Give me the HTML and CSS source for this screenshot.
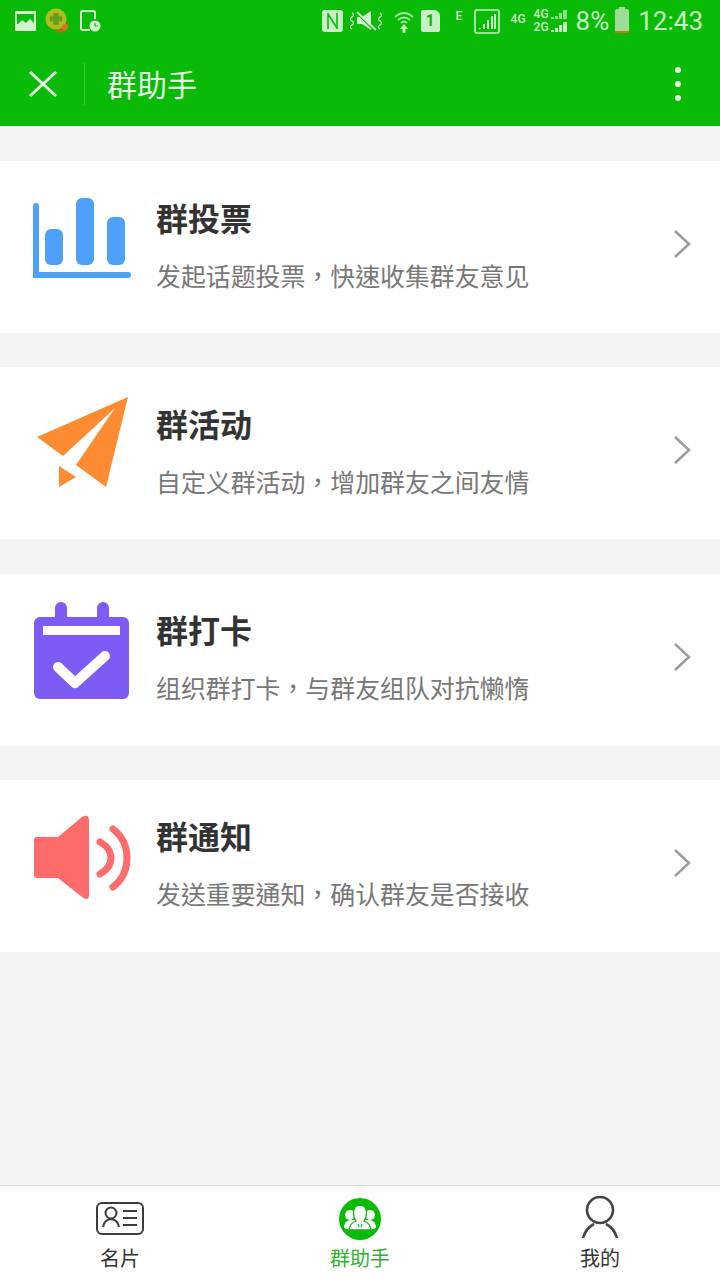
FILE: index.html
```html
<!DOCTYPE html>
<html lang="zh-CN">
<head>
   <meta charset="UTF-8">
   <meta name="viewport" content="width=device-width, initial-scale=1.0">
   <title>群助手</title>
   <link rel="stylesheet" href="styles.css">
</head>
<body>

<div class="header">
   <div class="status-bar">
       <div class="status-left">
           <svg width="21" height="20" viewBox="0 0 21 20"><rect width="21" height="20" rx="1" fill="#d3f2d0"/><rect x="2" y="3" width="17" height="10" fill="#09bb07"/><path d="M2 14 L7 9 L11 12 L15 8 L19 12 V15 H2Z" fill="#d3f2d0"/></svg>
           <svg width="26" height="26" viewBox="0 0 26 26"><circle cx="11" cy="11" r="10.5" fill="#b3ba1c"/><path d="M11 5 V17 M5 11 H17" stroke="#5f9e16" stroke-width="5"/><path d="M23 13 Q25 23 15 25 Q12 25 10 22 Q20 22 23 13Z" fill="#c8601e"/><circle cx="20" cy="19" r="3" fill="#d07a28"/></svg>
           <svg width="21" height="22" viewBox="0 0 21 22"><path d="M10 20 H3 Q1 20 1 18 V3 Q1 1 3 1 H13 Q15 1 15 3 V9" fill="none" stroke="#d3f2d0" stroke-width="2"/><circle cx="15" cy="16" r="5.5" fill="#d3f2d0"/><path d="M15 13 V16 H18" fill="none" stroke="#09bb07" stroke-width="1.2"/></svg>
       </div>
       <div class="status-right">
           <svg class="ic-n" width="21" height="22" viewBox="0 0 21 22"><rect width="21" height="22" rx="3" fill="#c9efc7"/><path d="M6 3 V19 M15 3 V19 M6 4 L15 18" fill="none" stroke="#09bb07" stroke-width="1.6"/></svg>
           <svg class="ic-mute" width="32" height="22" viewBox="0 0 32 22"><path d="M2 3 q3 2 0 4 q-3 2 0 4 q3 2 0 4 q-3 2 0 4 M30 3 q3 2 0 4 q-3 2 0 4 q3 2 0 4 q-3 2 0 4" fill="none" stroke="#d3f2d0" stroke-width="1.3"/><path d="M7 7 H12 L21 1 V20 L12 14 H7Z" fill="#d3f2d0"/><path d="M6 2 L25 21" stroke="#09bb07" stroke-width="2"/><path d="M7 2 L26 20" stroke="#d3f2d0" stroke-width="2"/></svg>
           <svg class="ic-wifi" width="20" height="24" viewBox="0 0 20 24"><path d="M1 8 Q10 0 19 8 M4 11 Q10 6 16 11 M7 14 Q10 11 13 14" fill="none" stroke="#a9e4a6" stroke-width="1.7"/><path d="M10 15 L14 20 H11.5 V24 H8.5 V20 H6Z" fill="#c9efc7"/></svg>
           <div class="sim">1</div>
           <span class="tiny ic-e">E</span>
           <svg class="ic-signal" width="26" height="25" viewBox="0 0 26 25"><rect x="1" y="1" width="24" height="23" rx="1.5" fill="none" stroke="#c9efc7" stroke-width="1.6"/><path d="M5 20 h2 v-1 h-2z M9 20 h2 v-5 h-2z M13 20 h2 v-9 h-2z M17 20 h2 v-13 h-2z M20 20 h2 v-15 h-2z" fill="#c9efc7"/></svg>
           <span class="tiny ic-4g">4G</span>
           <div class="dual">
               <span class="tiny">4G</span>
               <span class="tiny">2G</span>
           </div>
           <svg class="ic-bars" width="18" height="24" viewBox="0 0 18 24"><path d="M1 10 h3 v-2 h-3z M5 10 h3 v-3 h-3z M9 10 h3 v-6 h-3z M13 10 h4 v-9 h-4z" fill="#8fdb8c"/><path d="M1 23 h3 v-2 h-3z M5 23 h3 v-4 h-3z M9 23 h3 v-7 h-3z M13 23 h4 v-10 h-4z" fill="#c9efc7"/></svg>
           <span class="battery-text">8%</span>
           <div class="battery"><div class="battery-low"></div></div>
           <span class="clock">12:43</span>
       </div>
   </div>
   <div class="nav-bar">
       <svg class="nav-close" width="30" height="30" viewBox="0 0 30 30"><path d="M2 3 L28 27 M28 3 L2 27" stroke="#e6f8e5" stroke-width="3"/></svg>
       <div class="nav-line"></div>
       <div class="nav-title">群助手</div>
       <div class="nav-more"><i></i><i></i><i></i></div>
   </div>
</div>

<div class="list">
   <div class="card">
       <svg class="card-icon" viewBox="33 161 98 172"><path d="M36 206 V275 H128" fill="none" stroke="#4ea1fb" stroke-width="6" stroke-linecap="round"/><rect x="45" y="229" width="18" height="36" rx="6" fill="#4ea1fb"/><rect x="76" y="198" width="18" height="67" rx="6" fill="#4ea1fb"/><rect x="107" y="217" width="18" height="48" rx="6" fill="#4ea1fb"/></svg>
       <div class="card-text">
           <div class="card-title">群投票</div>
           <div class="card-sub" lang="zh-TW">发起话题投票，快速收集群友意见</div>
       </div>
       <svg class="chevron" width="18" height="30" viewBox="0 0 18 30"><path d="M2 2 L16 15 L2 28" fill="none" stroke="#9b9b9b" stroke-width="2.5"/></svg>
   </div>
   <div class="card">
       <svg class="card-icon" viewBox="33 367 98 172"><path d="M128 397 L37 437 L63 456 L115 408Z M128 397 L115 408 L76 465 L106 487Z M59 466 L76 477 L59 487Z" fill="#fd8b31"/></svg>
       <div class="card-text">
           <div class="card-title">群活动</div>
           <div class="card-sub" lang="zh-TW">自定义群活动，增加群友之间友情</div>
       </div>
       <svg class="chevron" width="18" height="30" viewBox="0 0 18 30"><path d="M2 2 L16 15 L2 28" fill="none" stroke="#9b9b9b" stroke-width="2.5"/></svg>
   </div>
   <div class="card">
       <svg class="card-icon" viewBox="33 574 98 172"><rect x="55" y="602" width="12" height="24" rx="6" fill="#7f5bf6"/><rect x="97" y="602" width="12" height="24" rx="6" fill="#7f5bf6"/><rect x="34" y="617" width="95" height="82" rx="6" fill="#7f5bf6"/><rect x="43" y="626" width="77" height="9" fill="#fff"/><path d="M58 667 L75 683 L105 656" fill="none" stroke="#fff" stroke-width="10" stroke-linecap="round" stroke-linejoin="round"/></svg>
       <div class="card-text">
           <div class="card-title">群打卡</div>
           <div class="card-sub" lang="zh-TW">组织群打卡，与群友组队对抗懒惰</div>
       </div>
       <svg class="chevron" width="18" height="30" viewBox="0 0 18 30"><path d="M2 2 L16 15 L2 28" fill="none" stroke="#9b9b9b" stroke-width="2.5"/></svg>
   </div>
   <div class="card">
       <svg class="card-icon" viewBox="33 780 98 172"><path d="M37 837 H58 L82 817 Q89 813 89 821 V895 Q89 902 82 897 L58 878 H37 Q34 878 34 875 V840 Q34 837 37 837Z" fill="#fd6b6b"/><path d="M100 842 Q111 848 111 858 Q111 868 100 874" fill="none" stroke="#fd6b6b" stroke-width="7" stroke-linecap="round"/><path d="M113 829 Q127 840 127 858 Q127 876 113 887" fill="none" stroke="#fd6b6b" stroke-width="7" stroke-linecap="round"/></svg>
       <div class="card-text">
           <div class="card-title">群通知</div>
           <div class="card-sub" lang="zh-TW">发送重要通知，确认群友是否接收</div>
       </div>
       <svg class="chevron" width="18" height="30" viewBox="0 0 18 30"><path d="M2 2 L16 15 L2 28" fill="none" stroke="#9b9b9b" stroke-width="2.5"/></svg>
   </div>
</div>

<div class="tab-bar">
   <div class="tab">
       <svg class="tab-icon" width="48" height="44" viewBox="0 0 48 44"><rect x="1" y="6" width="46" height="31" rx="5" fill="none" stroke="#3c3c3c" stroke-width="2"/><circle cx="15" cy="16" r="5.5" fill="none" stroke="#3c3c3c" stroke-width="2"/><path d="M7 30 Q8 23 15 22 Q22 23 23 30" fill="none" stroke="#3c3c3c" stroke-width="2"/><path d="M27 14 H41 M27 21 H41 M27 28 H41" stroke="#3c3c3c" stroke-width="2"/></svg>
       <div class="tab-label">名片</div>
   </div>
   <div class="tab tab-active">
       <svg class="tab-icon" width="44" height="44" viewBox="0 0 44 44"><circle cx="22" cy="22" r="21" fill="#09bb07"/><circle cx="12" cy="18" r="5" fill="#fff"/><circle cx="32" cy="18" r="5" fill="#fff"/><path d="M6 31 Q6 24 12 23 H32 Q38 24 38 31 L32 33 H12Z" fill="#fff"/><path d="M15.5 16 Q15.5 8 22 8 Q28.5 8 28.5 16 Q28.5 21 26 24 Q32 26 33 33 H11 Q12 26 18 24 Q15.5 21 15.5 16Z" fill="#fff" stroke="#09bb07" stroke-width="1.3"/><path d="M20 27 L21 30 M24 27 L23 30" stroke="#09bb07" stroke-width="1.2"/></svg>
       <div class="tab-label">群助手</div>
   </div>
   <div class="tab">
       <svg class="tab-icon" width="44" height="44" viewBox="0 0 44 44"><circle cx="22" cy="13" r="13" fill="none" stroke="#444" stroke-width="2.6"/><path d="M5 41 Q8 31 16 27 M39 41 Q36 31 28 27" fill="none" stroke="#444" stroke-width="2.6"/></svg>
       <div class="tab-label">我的</div>
   </div>
</div>

</body>
</html>
```

FILE: styles.css
```css
body {
    font-family: "Noto Sans CJK SC", "Noto Sans", sans-serif;
    background-color: #f4f4f6;
    margin: 0;
    height: 1280px;
    display: flex;
    flex-direction: column;
    overflow: hidden;
}
.header {
    background-color: #09bb07;
    height: 126px;
    flex-shrink: 0;
}
.status-bar {
    height: 42px;
    display: flex;
    justify-content: space-between;
    align-items: center;
    padding: 0 17px 0 15px;
}
.status-left {
    display: flex;
    align-items: center;
    gap: 9px;
}
.status-right {
    display: flex;
    align-items: center;
    font-family: Roboto, sans-serif;
    color: #c9efc7;
}
.ic-mute {
    margin-left: 7px;
}
.ic-wifi {
    margin-left: 12px;
}
.sim {
    width: 19px;
    height: 22px;
    margin-left: 7px;
    background-color: #c9efc7;
    border-radius: 2px 6px 2px 2px;
    color: #09bb07;
    font-size: 16px;
    font-weight: 700;
    line-height: 22px;
    text-align: center;
}
.tiny {
    font-size: 12px;
    font-weight: 500;
    line-height: 13px;
}
.ic-e {
    margin: -10px 0 0 16px;
    width: 8px;
}
.ic-signal {
    margin-left: 10px;
}
.ic-4g {
    margin: -4px 0 0 11px;
}
.dual {
    display: flex;
    flex-direction: column;
    margin-left: 8px;
}
.ic-bars {
    margin-left: 1px;
}
.battery-text {
    font-size: 26px;
    margin-left: 8px;
}
.battery {
    width: 14px;
    height: 24px;
    margin-left: 6px;
    background-color: #9fdc98;
    border-radius: 2px;
    position: relative;
    display: flex;
    align-items: flex-end;
}
.battery:before {
    content: "";
    position: absolute;
    top: -2px;
    left: 4px;
    width: 6px;
    height: 2px;
    background-color: #9fdc98;
}
.battery-low {
    width: 100%;
    height: 2px;
    background-color: #d0701c;
}
.clock {
    font-size: 26px;
    margin-left: 9px;
}
.nav-bar {
    height: 84px;
    display: flex;
    align-items: center;
    padding-left: 28px;
}
.nav-line {
    width: 1px;
    height: 42px;
    margin-left: 26px;
    background-color: #3fcb3d;
}
.nav-title {
    margin-left: 22px;
    padding-bottom: 3px;
    font-size: 30px;
    color: #e6f8e5;
}
.nav-more {
    margin-left: auto;
    margin-right: 39px;
    display: flex;
    flex-direction: column;
    gap: 8px;
}
.nav-more i {
    display: block;
    width: 6px;
    height: 6px;
    border-radius: 50%;
    background-color: #e6f8e5;
}
.list {
    flex: 1;
    padding-top: 35px;
    display: flex;
    flex-direction: column;
    gap: 34.3px;
}
.card {
    height: 172px;
    background-color: white;
    display: flex;
    align-items: center;
    padding: 0 29px 0 33px;
}
.card-icon {
    width: 98px;
    height: 172px;
    flex-shrink: 0;
}
.card-text {
    flex: 1;
    margin-left: 25px;
    padding-bottom: 3px;
}
.card-title {
    font-size: 32px;
    font-weight: 700;
    line-height: 40px;
    color: #333;
}
.card-sub {
    font-family: "Noto Sans CJK TC", "Noto Sans CJK SC", sans-serif;
    font-size: 24.9px;
    line-height: 40px;
    margin-top: 18px;
    color: #777;
}
.chevron {
    margin-bottom: 6px;
}
.tab-bar {
    height: 94px;
    flex-shrink: 0;
    background-color: white;
    border-top: 1px solid #dcdcde;
    display: flex;
}
.tab {
    flex: 1;
    display: flex;
    flex-direction: column;
    align-items: center;
    padding-top: 11px;
}
.tab-icon {
    height: 44px;
    overflow: visible;
}
.tab-label {
    font-size: 20px;
    line-height: 30px;
    margin-top: 2px;
    color: #333;
}
.tab-active .tab-label {
    color: #2fb32d;
}
```
